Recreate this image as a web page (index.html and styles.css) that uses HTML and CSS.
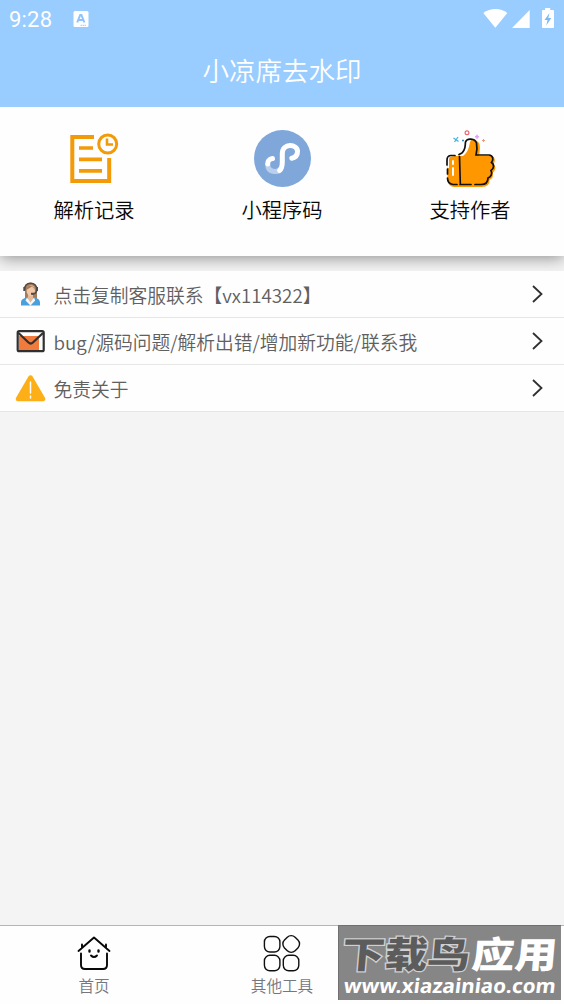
FILE: index.html
```html
<!DOCTYPE html>
<html lang="zh-CN">
<head>
<meta charset="utf-8">
<title>小凉席去水印</title>
<link rel="stylesheet" href="styles.css">
</head>
<body>
<div class="app">
  <header class="header">
    <div class="status">
      <span class="time">9:28</span>
      <svg class="notice" width="16" height="16" viewBox="0 0 16 16"><rect x=".5" width="15" height="16" rx="1.500" fill="#fff"/><path d="M4.200 11.500 7.200 4h1.200l3 7.500M5.500 9h4.800" fill="none" stroke="#8fc4fa" stroke-width="2"/><path d="M7.500 14.300h6" stroke="#9cf" stroke-dasharray="1.500 .5"/></svg>
      <svg class="signals" width="74" height="24" viewBox="482 6 74 24"><path d="M483.300 13C490 7.700 501 7.700 507.300 13L495.300 27.800Z" fill="#fff"/><path d="M529.700 10V28H512Z" fill="#fff"/><path d="M545 8h5.200v2H553q1 0 1 1v16q0 1-1 1h-10q-1 0-1-1V11q0-1 1-1h2Z" fill="#fff"/><path d="m549.500 13-5 7h3l-1.200 5.500 5-7.500h-3Z" fill="#7fb9f2"/></svg>
    </div>
    <h1 class="title">小凉席去水印</h1>
  </header>

  <section class="actions">
    <div class="action">
      <svg width="60" height="60" viewBox="64 129 60 60" fill="none" stroke="#f39a09"><path d="M94 137H72.300v44H109.200V158" stroke-width="4"/><path d="M79 148h14M79 159.300h23M79 170.800h23" stroke-width="3.700"/><circle cx="107.700" cy="144" r="9" stroke-width="3"/><path d="M107 138.500v6h6" stroke-width="2.600"/></svg>
      <span>解析记录</span>
    </div>
    <div class="action">
      <svg width="60" height="60" viewBox="252 129 60 60" fill="none" stroke-width="5" stroke-linecap="round"><circle cx="282.500" cy="158.500" r="28.500" fill="#7fa7da"/><path d="M267.700 164C267.500 173 278 173 281 168.500" stroke="#b9cfec"/><path d="M272.500 158.500C269 159 267.500 161.500 267.700 164M279.500 170.500C282 168.500 282.300 166 282.300 162V153.500C282.300 143 297.500 143.500 297.500 151.500 297.500 155.500 295 157.500 291.800 158.200" stroke="#fff"/></svg>
      <span>小程序码</span>
    </div>
    <div class="action">
      <svg width="60" height="60" viewBox="440 129 60 60"><path d="M451 156.500C458 156 465 152 466.500 144 467 138 477 138 479.500 144 480.500 148 479.500 153 479 156H491C495 156.500 496 161 493.500 164 497 167 495 171 492.500 173 494 177 491.500 179 489.500 180 490 184 487 187 482 187H454C448 186 447.500 182 447.500 176V161Q447.500 157 451 156.500Z" fill="#ff9800"/><path d="M460 154.500C467 150 466 145 466 142 467.500 139 470 139 471 140 469 143 470 151 463 156H452Q449 156 449 160V168H447.500V160Q447.500 156 451 155.500Z" fill="#fff"/><path d="M462 153C466 149 465 145 465.500 142 467 137.500 475 138.500 476.500 143 477.500 148 477 151 476 155H489C493 155.500 494 159 491.500 162.500 495 165 493.500 169 491 170.500 493 174 490.500 177 488 178 488 182 486 184.500 481 184.500H475M471 184.500H460M457 184.500H453C449 184 447.500 181 447.500 178M447.500 174V169M447 165V160Q447 156 450.500 155.500H455M459 154.500 462 153M459.500 156.500 460.300 183.500" fill="none" stroke="#101010" stroke-width="1.700" stroke-linecap="round"/><path d="M453 161v3M453 168v7" stroke="#fff" stroke-width="2" stroke-linecap="round"/><circle cx="467" cy="132.800" r="1.900" fill="none" stroke="#ec6872" stroke-width="1.200"/><path d="m453.500 138 5 3.500m-.5-4.500-3.500 5" stroke="#48b3d9" stroke-width="1.300"/><path d="M462 140.500h2" stroke="#248bc2" stroke-width="1.500"/><path d="M475 136.700h4m-2-2v4" stroke="#dfa6f3" stroke-width="1.600"/><path d="M482 140.500h3m-1.500-1.500v3" stroke="#ed9a83"/></svg>
      <span>支持作者</span>
    </div>
  </section>

  <main class="list">
    <div class="row">
      <svg class="row-icon" width="32" height="32" viewBox="14 278 32 32"><path d="M25 288C24 281 37 281 37 288V299H25Z" fill="#a77b59"/><path d="M28 295h5v5l-2.500 5-3-5Z" fill="#e5b896"/><ellipse cx="30.800" cy="290.500" rx="4.200" ry="5.500" fill="#f0c8a8"/><path d="M26.300 290C27 284 33 284 35.200 290L32 286.500Z" fill="#a77b59"/><path d="M21 305.500V302Q21 298.500 27 297.500L30.500 305.500 34 297.500Q40 298.500 40 302.500V305.500Z" fill="#49a1dc"/><path d="m27 297.500-1.500 3 5 5 4.700-5-1.200-3-3.500 5Z" fill="#f5f7f9"/><path d="M24.700 290C23 281 38 281 36.700 290Q36.500 294 32 294" fill="none" stroke="#4b4b4b" stroke-width="1.500"/><path d="M24.300 287v4M37 287v4M31 293.700h3" stroke="#4b4b4b" stroke-width="2"/></svg>
      <span class="row-text">点击复制客服联系【vx114322】</span>
      <svg class="arrow" width="16" height="24" viewBox="0 0 16 24"><path d="m3 4 8.500 8L3 20"/></svg>
    </div>
    <div class="row">
      <svg class="row-icon" width="32" height="32" viewBox="14 325 32 32"><rect x="18" y="331.500" width="25" height="19.500" fill="#fff"/><path d="M19 336h20v14H19Z" fill="#f07b3d"/><rect x="17.700" y="331.200" width="26" height="20" rx="1.500" fill="none" stroke="#303030" stroke-width="2.200"/><path d="m18.500 333 10 9.500q2.200 2 4.400 0L43 333" fill="none" stroke="#303030" stroke-width="2.200"/></svg>
      <span class="row-text">bug/源码问题/解析出错/增加新功能/联系我</span>
      <svg class="arrow" width="16" height="24" viewBox="0 0 16 24"><path d="m3 4 8.500 8L3 20"/></svg>
    </div>
    <div class="row">
      <svg class="row-icon" width="32" height="32" viewBox="14 372 32 32"><path d="M30.500 377.500 43 399H18Z" fill="#fcaf17" stroke="#fcaf17" stroke-width="4.500" stroke-linejoin="round"/><path d="M30.500 382v11M30.500 396v2" stroke="#fff" stroke-width="1.500" stroke-linecap="round"/></svg>
      <span class="row-text">免责关于</span>
      <svg class="arrow" width="16" height="24" viewBox="0 0 16 24"><path d="m3 4 8.500 8L3 20"/></svg>
    </div>
  </main>

  <nav class="tabs">
    <div class="tab">
      <svg width="40" height="40" viewBox="74 933 40 40" fill="none" stroke="#080808" stroke-width="1.900" stroke-linecap="round" stroke-linejoin="round"><path d="M78.500 951 94 937.500 109.500 951M82 948V944.500M106 948V944.500M81 953.500V965Q81 969 85 969H103Q107 969 107 965V953.500M91 955.500Q94 958.500 97 955.500"/><path d="M89.500 950.500v1M98.500 950.500v1" stroke-width="2.400"/></svg>
      <span>首页</span>
    </div>
    <div class="tab">
      <svg width="40" height="40" viewBox="262 933 40 40" fill="none" stroke="#101010" stroke-width="1.400"><rect x="264.400" y="936.500" width="15.500" height="15.500" rx="5.500"/><rect x="264.400" y="955.300" width="15.500" height="15.500" rx="5.500"/><rect x="283.300" y="955.300" width="15.500" height="15.500" rx="5.500"/><rect x="283.700" y="936.500" width="15" height="15" rx="5.500" transform="rotate(45 291.200 944)"/></svg>
      <span>其他工具</span>
    </div>
    <div class="tab"></div>
  </nav>

  <svg class="watermark" width="223" height="75" viewBox="338 925 223 75">
    <rect x="338" y="925" width="223" height="75" fill="#868686"/>
    <path d="M338.500 1000V925.500H561" fill="none" stroke="#707070"/>
    <g class="brand" transform="translate(341 968) skewX(-5)">
      <text class="brand-dark" transform="scale(1.170 1)">下载鸟</text>
      <text class="brand-light" x="111" transform="scale(1.170 1)">应用</text>
    </g>
    <g transform="translate(343 993) skewX(-7)">
      <text class="site" textLength="212" lengthAdjust="spacingAndGlyphs">www.xiazainiao.com</text>
    </g>
  </svg>
</div>
</body>
</html>
```
FILE: styles.css
```css
* { box-sizing: border-box; }
body { margin: 0; font-family: "Noto Sans CJK SC", sans-serif; font-weight: 350; }
svg { display: block; flex: none; }
.app { position: relative; width: 564px; height: 1004px; overflow: hidden; display: flex; flex-direction: column; background: #f4f4f4; }
.header { height: 107px; flex: none; background: #99ccff; color: #fff; }
.status { height: 38px; display: flex; align-items: center; padding: 0 8px 0 9px; }
.time { width: 64px; font: 400 22px/38px Roboto, sans-serif; letter-spacing: .2px; padding-top: 2px; }
.signals { margin-left: auto; margin-top: -2px; }
.title { margin: 0; text-align: center; font-size: 26.5px; font-weight: 350; line-height: 64px; }
.actions { height: 149px; flex: none; display: flex; padding-top: 22px; background: #fefefe; box-shadow: 0 2px 15px rgba(0, 0, 0, .42); z-index: 1; clip-path: inset(0 0 -15px 0); }
.action { flex: 1; display: flex; flex-direction: column; align-items: center; color: #080808; font-size: 20.3px; line-height: 30px; gap: 5px; }
.list { margin-top: 15px; position: relative; z-index: 2; }
.row { height: 47px; display: flex; align-items: center; padding: 0 18px 0 14px; background: #fefefe; border-bottom: 1px solid #e6e6e6; }
.row-text { margin-left: 7.5px; color: #606060; font-size: 18.75px; line-height: 30px; padding-top: 1px; white-space: nowrap; }
.arrow { margin-left: auto; }
.arrow path { fill: none; stroke: #303030; stroke-width: 1.8; }
.tabs { height: 79px; margin-top: auto; display: flex; background: #fefefe; border-top: 1px solid #b5b5b5; }
.tab { flex: 1; display: flex; flex-direction: column; align-items: center; padding-top: 7px; color: #74777e; font-size: 15.6px; line-height: 24px; }
.watermark { position: absolute; left: 338px; top: 925px; z-index: 3; }
.brand { font: 900 36.5px "Noto Sans CJK SC", sans-serif; }
.brand-dark { fill: #5c5c5c; stroke: #d0d0d0; stroke-width: 2.5px; paint-order: stroke; }
.brand-light { fill: #fff; }
.site { font: 700 20px "Noto Sans", sans-serif; fill: #fff; }
```
